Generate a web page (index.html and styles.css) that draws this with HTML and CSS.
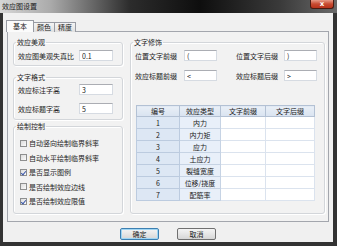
FILE: index.html
```html
<!DOCTYPE html>
<html lang="zh-CN">
  <head>
    <meta charset="UTF-8" />
    <title>效应图设置</title>
    <link rel="stylesheet" href="styles.css">
  </head>
  <body>
    <div class="window">
      <div class="titlebar">
        <span class="title">效应图设置</span>
        <span class="close">x</span>
      </div>
      <div class="client">
        <div class="tabs">
          <span class="tab active">基本</span>
          <span class="tab">颜色</span>
          <span class="tab">精度</span>
        </div>
        <div class="panel">
          <div class="col-left">
            <fieldset class="group g-look">
              <legend>效应美观</legend>
              <div class="field"><label>效应图美观失真比</label><input type="text" value="0.1"></div>
            </fieldset>
            <fieldset class="group g-text">
              <legend>文字格式</legend>
              <div class="field"><label>效应标注字高</label><input type="text" value="3"></div>
              <div class="field"><label>效应标题字高</label><input type="text" value="5"></div>
            </fieldset>
            <fieldset class="group g-draw">
              <legend>绘制控制</legend>
              <div class="check"><span class="box"></span>自动竖向绘制临界斜率</div>
              <div class="check"><span class="box"></span>自动水平绘制临界斜率</div>
              <div class="check"><span class="box checked"></span>是否显示图例</div>
              <div class="check"><span class="box"></span>是否绘制效应边线</div>
              <div class="check"><span class="box checked"></span>是否绘制效应限值</div>
            </fieldset>
          </div>
          <fieldset class="group col-right">
            <legend>文字修饰</legend>
            <div class="fix-grid">
              <label>位置文字前缀</label><input type="text" value="(">
              <span></span>
              <label>位置文字后缀</label><input type="text" value=")">
              <label>效应标题前缀</label><input type="text" value="&lt;">
              <span></span>
              <label>效应标题后缀</label><input type="text" value="&gt;">
            </div>
            <table class="effects">
              <thead>
                <tr><th>编号</th><th>效应类型</th><th>文字前缀</th><th>文字后缀</th></tr>
              </thead>
              <tbody>
                <tr><td class="num">1</td><td class="type">内力</td><td></td><td></td></tr>
                <tr><td class="num">2</td><td class="type">内力矩</td><td></td><td></td></tr>
                <tr><td class="num">3</td><td class="type">应力</td><td></td><td></td></tr>
                <tr><td class="num">4</td><td class="type">土应力</td><td></td><td></td></tr>
                <tr><td class="num">5</td><td class="type">裂缝宽度</td><td></td><td></td></tr>
                <tr><td class="num">6</td><td class="type">位移/挠度</td><td></td><td></td></tr>
                <tr><td class="num">7</td><td class="type">配筋率</td><td></td><td></td></tr>
              </tbody>
            </table>
          </fieldset>
        </div>
        <div class="buttons">
          <button class="btn default">确定</button>
          <button class="btn">取消</button>
        </div>
      </div>
    </div>
  </body>
</html>
```

FILE: styles.css
```css
* {
  box-sizing: border-box;
  margin: 0;
  padding: 0;
}

body {
  font-family: "Noto Sans CJK SC", sans-serif;
  font-size: 7px;
  line-height: 8px;
  color: #222;
  background: #fff;
}

.window {
  width: 337px;
  height: 246px;
  display: flex;
  flex-direction: column;
  background: #333;
}

/* title bar */
.titlebar {
  height: 13px;
  display: flex;
  justify-content: space-between;
  align-items: flex-start;
  background: linear-gradient(to right, #d6d6d6 0, #ababab 50px, #2c2c2c 130px, #0e0e0e 200px, #3a3a3a 280px, #6a6a6a 337px);
}

.title {
  padding: 2px 0 0 2px;
  color: #1a1a1a;
}

.close {
  width: 24px;
  height: 9px;
  margin-right: 3px;
  border: 1px solid #4a1a10;
  border-top: none;
  border-radius: 0 0 3px 3px;
  background: linear-gradient(#e79a86, #c84a30 50%, #b8321a);
  color: #fff;
  font-family: "DejaVu Sans", sans-serif;
  font-weight: bold;
  font-size: 7px;
  line-height: 8px;
  text-align: center;
}

.client {
  flex: 1;
  margin: 0 4px 4px 3px;
  padding: 7px 4px 0 4px;
  background: #f0f0f0;
}

/* tabs */
.tabs {
  display: flex;
  align-items: flex-end;
  height: 12px;
  margin: 0 0 -1px -1px;
}

.tab {
  height: 10px;
  padding: 0 3px;
  border: 1px solid #989ba3;
  border-bottom: none;
  border-left: none;
  background: linear-gradient(#f4f4f4, #e0e0e0);
  line-height: 9px;
}

.tab.active {
  position: relative;
  z-index: 1;
  height: 12px;
  padding: 0 6px;
  border-left: 1px solid #989ba3;
  background: #fbfbfb;
  line-height: 10px;
}

.panel {
  height: 191px;
  display: flex;
  gap: 7px;
  padding: 6px 3px 7px 5px;
  border: 1px solid #a3a6ad;
  background: #f2f2f2;
}

/* group boxes */
.group {
  min-width: 0;
  padding: 4px;
  border: 1px solid #d3d6da;
  border-radius: 3px;
  box-shadow: inset 1px 1px 0 #fff, 1px 1px 0 #fff;
}

.group legend {
  padding: 0 1px;
  margin-left: -2px;
  line-height: 8px;
}

.col-left {
  width: 110px;
  display: flex;
  flex-direction: column;
}

.g-text {
  margin-top: 7px;
  padding-top: 3px;
  padding-bottom: 5px;
  display: flex;
  flex-direction: column;
  gap: 8px;
}

.g-draw {
  flex: 1;
  margin-top: 2px;
  padding-top: 6px;
}

.field {
  display: flex;
  align-items: center;
  height: 11px;
}

.field label {
  width: 61px;
}

input {
  width: 34px;
  height: 11px;
  padding: 0 2px;
  border: 1px solid #d6dbe2;
  border-top-color: #abadb3;
  background: #fff;
  font: inherit;
  line-height: 9px;
  color: #222;
}

.check {
  display: flex;
  align-items: center;
  gap: 2px;
  height: 14.5px;
  padding-left: 2px;
}

.box {
  width: 7px;
  height: 7px;
  border: 1px solid #8e8f8f;
  background: linear-gradient(135deg, #dcdcdc, #fbfbfb);
  position: relative;
}

.box.checked::after {
  content: "";
  position: absolute;
  left: 1px;
  top: 0;
  width: 2px;
  height: 4px;
  border: solid #3a56a8;
  border-width: 0 1px 1px 0;
  transform: rotate(40deg);
}

/* right side */
.col-right {
  width: 195px;
}

.fix-grid {
  display: grid;
  grid-template-columns: 49px 33px 19px 48px 33px;
  grid-auto-rows: 11px;
  row-gap: 9px;
  align-items: center;
}

.fix-grid input {
  width: 33px;
}

.effects {
  width: 178px;
  margin: 24px 0 0 1px;
  border-collapse: collapse;
  border: 1px solid #a9b6c8;
  table-layout: fixed;
}

.effects th,
.effects td {
  border: 1px solid #c6d3e4;
  text-align: center;
  font-weight: normal;
  padding: 0;
}

.effects th {
  height: 11px;
  background: linear-gradient(#e9eff7, #d9e3f0);
  border-color: #b3c1d4;
}

.effects th:nth-child(1) { width: 43px; }
.effects th:nth-child(2) { width: 41px; }
.effects th:nth-child(3) { width: 45px; }
.effects th:nth-child(4) { width: 49px; }

.effects td {
  height: 12px;
  background: #fff;
  border-color: #dbe3ee;
}

.effects td.num {
  background: #dde7f4;
  border-color: #bccbdf;
}

.effects td.type {
  background: #e8eff9;
  border-color: #c6d3e4;
}

/* buttons */
.buttons {
  display: flex;
  justify-content: center;
  gap: 18px;
  margin-top: 6px;
}

.btn {
  width: 39px;
  height: 12px;
  border: 1px solid #707070;
  border-radius: 2px;
  background: linear-gradient(#f4f4f4, #e6e6e6 50%, #d6d6d6);
  font: inherit;
  line-height: 9px;
  color: #222;
}

.btn.default {
  border-color: #3c7fb1;
  box-shadow: inset 0 0 0 1px #9fd5f3;
}
```
